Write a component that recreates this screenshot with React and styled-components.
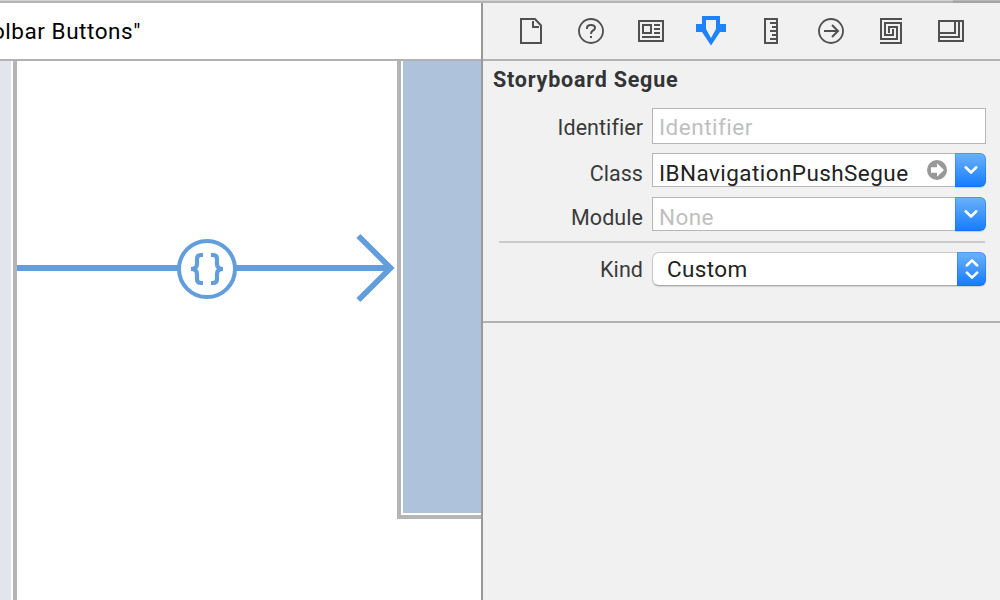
import React from 'react';
import styled, { createGlobalStyle } from 'styled-components';

const Global = createGlobalStyle`
  * { box-sizing: border-box; }
  body { margin: 0; background: #fff; overflow: hidden; font-family: Roboto, "Liberation Sans", sans-serif; }
  svg { display: block; flex: none; }
`;

const Window = styled.div`
  width: 1000px; height: 600px; display: flex; flex-direction: column; background: #fff;
`;
const TopEdge = styled.div`
  height: 3px; flex: none; display: flex;
`;
const EdgePart = styled.div`
  width: ${p => p.$w}px; background: ${p => p.$fill};
  border-top: 1px solid ${p => p.$light};
`;
const Body = styled.div`display: flex; flex: 1; min-height: 0;`;
const Editor = styled.main`width: 481px; display: flex; flex-direction: column;`;
const JumpBar = styled.div`
  height: 58px; flex: none; border-bottom: 2px solid #b2b2b2; overflow: hidden;
  display: flex; align-items: center; justify-content: flex-end; padding: 0 340px 1px 0;
`;
const Crumb = styled.span`
  font-size: 22.5px; line-height: 28px; white-space: nowrap; color: #000; letter-spacing: 0.55px;
`;
const Canvas = styled.div`flex: 1; display: flex; min-height: 0; overflow: hidden;`;
const SourceScene = styled.div`
  width: 17px; background: #e2e6ec; border-right: 4px solid #b5b5b5; box-shadow: inset -2px 0 #fff;
`;
const SegueArea = styled.div`width: 380px; padding-top: 170px;`;
const TargetScene = styled.div`
  width: 84px; height: 458px; background: #afc2db;
  border: solid #b5b5b5; border-width: 0 0 4px 4px; box-shadow: inset 2px -2px #fff;
`;
const Inspector = styled.aside`
  width: 519px; background: #f1f1f1; border-left: 2px solid #999; display: flex; flex-direction: column;
`;
const Tabs = styled.nav`
  height: 58px; flex: none; border-bottom: 2px solid #b2b2b2;
  display: flex; align-items: center; padding-left: 33px; gap: 30px;
`;
const Section = styled.section`
  height: 262px; border-bottom: 2px solid #b2b2b2; padding: 5px 14px 0 10px;
`;
const Title = styled.h2`
  margin: 0; height: 28px; font-size: 21.5px; line-height: 28px; font-weight: 700; color: #333436; letter-spacing: 0.78px;
`;
const Row = styled.div`
  display: flex; height: ${p => p.$h}px; margin-top: ${p => p.$gap}px;
`;
const Label = styled.label`
  width: 150px; margin-right: 9px; text-align: right; white-space: nowrap;
  font-size: 21.5px; line-height: ${p => p.$lh || 40}px; color: #3a3a3a; letter-spacing: 0.05px;
`;
const Field = styled.div`
  flex: 1; display: flex; align-items: center; background: #fff; border: 1px solid #b6b6b6;
  border-right-width: ${p => (p.$combo ? 0 : 1)}px; padding-left: 6px;
`;
const Value = styled.span`
  flex: 1; font-size: 22.5px; line-height: 30px; padding-top: ${p => p.$drop}px; white-space: nowrap;
  color: ${p => (p.$muted ? '#bfbfbf' : '#222')}; letter-spacing: ${p => p.$track || 0}px;
`;
const BlueButton = styled.div`
  width: ${p => p.$w}px; height: 34px; border-radius: 0 6px 6px 0;
  background: linear-gradient(#6cb3fa, #147cfe); box-shadow: inset 0 0 0 1px rgba(20, 100, 235, .35), 0 1px 1px rgba(0,0,0,.15);
  display: flex; align-items: center; justify-content: center;
`;
const Popup = styled.div`
  flex: 1; display: flex; align-items: center; background: #fff; border: 1px solid #c9c9c9; border-bottom-color: #aaa;
  border-right: 0; border-radius: 7px 0 0 7px; padding-left: 14px; box-shadow: 0 1px 1px rgba(0,0,0,.12);
`;
const Rule = styled.div`height: 2px; background: #cbcbcb; margin: 10px 1px 0 6px;`;

const GoIcon = styled.svg`margin-right: 8px;`;

const Icon = ({ children, color = '#505050' }) => (
  <svg width="30" height="30" viewBox="0 0 30 30" fill="none" stroke={color} strokeWidth="2">{children}</svg>
);

const Chevron = () => (
  <svg width="16" height="12" viewBox="0 0 16 12" fill="none" stroke="#fff" strokeWidth="2.6" strokeLinecap="round" strokeLinejoin="round">
    <path d="M2.7 3.3 8 8.5 13.3 3.3" />
  </svg>
);

const GoArrow = () => (
  <GoIcon width="20" height="20" viewBox="0 0 20 20">
    <circle cx="10" cy="10" r="10" fill="#989898" />
    <path d="M4 7.2H10V3.2L17 10 10 16.8V12.8H4Z" fill="#fff" />
  </GoIcon>
);

export default function App() {
  return (
    <Window>
      <Global />
      <TopEdge>
        <EdgePart $w={953} $light="#d2d2d2" $fill="#b5b5b5" />
        <EdgePart $w={47} $light="#b8b8b8" $fill="#a5a5a5" />
      </TopEdge>
      <Body>
        <Editor>
          <JumpBar><Crumb>Toolbar Buttons"</Crumb></JumpBar>
          <Canvas>
            <SourceScene />
            <SegueArea>
              <svg width="380" height="76" viewBox="17 231 380 76" fill="none" stroke="#629edb">
                <path d="M17 268H178M236 268H391" strokeWidth="6" />
                <path d="M358.4 236 390.6 268 358.4 300" strokeWidth="5.6" />
                <circle cx="207" cy="269" r="28" strokeWidth="4" />
                <path d="M203 255H201Q197 255 197 259V264Q197 269 191 269Q197 269 197 274V279Q197 283 201 283H203M211 255H213Q217 255 217 259V264Q217 269 223 269Q217 269 217 274V279Q217 283 213 283H211" strokeWidth="4.2" />
              </svg>
            </SegueArea>
            <TargetScene />
          </Canvas>
        </Editor>
        <Inspector>
          <Tabs>
            <Icon><path d="M5 3H19L25 9.5V27H5Z M17 5V11H23" /></Icon>
            <Icon>
              <circle cx="15" cy="15" r="12" strokeWidth="1.8" />
              <path d="M11 13V12Q11 9 15 9Q19 9 19 11.7Q19 13.5 17 14.5Q15 15.5 15 18" />
              <path d="M15 20V22" />
            </Icon>
            <Icon><path d="M3 5H27V25H3Z M7 9H15V17H7Z M18 9H24M18 13H24M18 17H24M6 21H24" /></Icon>
            <Icon color="none">
              <path fill="#1c83fb" fillRule="evenodd" d="M6 0H24V8H30V16H24L15 29.5 6 16H0V8H6Z M10 4V13L15 22 20 13V4Z" />
            </Icon>
            <Icon><path d="M9 3H21V27H9Z M14 7H20M16 11H20M14 15H20M16 19H20M14 23H20" /></Icon>
            <Icon><circle cx="15" cy="15" r="12" strokeWidth="1.8" /><path d="M8 15H22M16 9 22 15 16 21" /></Icon>
            <Icon><path d="M26 3H5V23H21V11H13V17M4 27H25V7H9V19H17V13" /></Icon>
            <Icon><path d="M3 5H27V25H3Z M3 21H23V5M3 17H19V5" /></Icon>
          </Tabs>
          <Section>
            <Title>Storyboard Segue</Title>
            <Row $h={36} $gap={14}>
              <Label>Identifier</Label>
              <Field><Value $muted $drop={1} $track={0.5}>Identifier</Value></Field>
            </Row>
            <Row $h={34} $gap={9}>
              <Label $lh={42}>Class</Label>
              <Field $combo><Value $drop={6} $track={0.43}>IBNavigationPushSegue</Value><GoArrow /></Field>
              <BlueButton $w={31}><Chevron /></BlueButton>
            </Row>
            <Row $h={34} $gap={10}>
              <Label $lh={42}>Module</Label>
              <Field $combo><Value $muted $drop={6} $track={0.4}>None</Value></Field>
              <BlueButton $w={31}><Chevron /></BlueButton>
            </Row>
            <Rule />
            <Row $h={34} $gap={9}>
              <Label $lh={36}>Kind</Label>
              <Popup><Value $drop={0} $track={0.35}>Custom</Value></Popup>
              <BlueButton $w={29}>
                <svg width="16" height="24" viewBox="0 0 16 24" fill="none" stroke="#fff" strokeWidth="2.5" strokeLinecap="round" strokeLinejoin="round">
                  <path d="M2.7 8.5 8 3.4 13.3 8.5M2.7 15.5 8 20.6 13.3 15.5" />
                </svg>
              </BlueButton>
            </Row>
          </Section>
        </Inspector>
      </Body>
    </Window>
  );
}
